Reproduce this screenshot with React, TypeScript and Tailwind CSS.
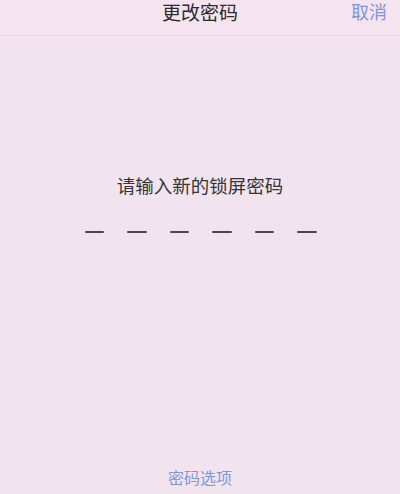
export default function App() {
  const slots = [0, 1, 2, 3, 4, 5];

  return (
    <div className="flex h-[494px] w-[400px] flex-col overflow-hidden bg-[#f2e4ef] font-['Noto_Sans_CJK_SC',sans-serif]">
      <div className="relative h-[36px] shrink-0 border-b border-[#e8d6e2] bg-[#f5e3ef]">
        <div className="text-center text-[19px] leading-[23px] text-[#2b2b2b]">更改密码</div>
        <div className="absolute right-[13px] top-0 text-[18px] leading-[23px] text-[#7d98d6]">取消</div>
      </div>

      <div className="flex flex-1 flex-col items-center pt-[136px]">
        <div className="text-[18.5px] leading-[26px] text-[#353535]">请输入新的锁屏密码</div>
        <div className="mt-[33px] flex gap-[23px] pl-[1px]">
          {slots.map((i) => (
            <div key={i} className="h-[2px] w-[19.5px] rounded-full bg-[#484848]" />
          ))}
        </div>
        <div className="mt-auto pb-[7px] text-[16px] leading-[20px] text-[#7d98d6]">密码选项</div>
      </div>
    </div>
  );
}
